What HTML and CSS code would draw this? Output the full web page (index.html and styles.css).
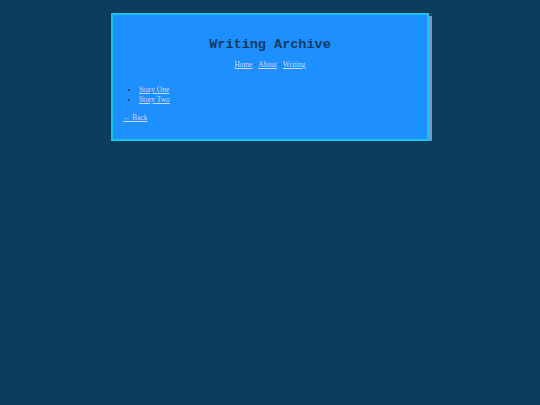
FILE: index.html
```html
<!DOCTYPE html>
<html>
<head>
<meta charset="utf-8">
<link rel="stylesheet" href="styles.css">
</head>
<body>
<div class="box">
  <h1 class="title">Writing Archive</h1>
  <nav class="nav"><a href="#">Home</a> · <a href="#">About</a> · <a href="#">Writing</a></nav>
  <ul class="list">
    <li><a href="#">Story One</a></li>
    <li><a href="#">Story Two</a></li>
  </ul>
  <p class="back"><a href="#">← Back</a></p>
</div>
</body>
</html>
```
FILE: styles.css
```css
html, body {
  margin: 0;
  padding: 0;
  background: #0b3d5e;
  font-family: "Liberation Serif", "Times New Roman", serif;
}
body {
  padding-top: 13px;
}
.box {
  width: 294px;
  margin: 0 auto;
  background: #1e8fff;
  border: 2px solid #19c4e4;
  box-shadow: 3px 3px 0 #8290c8;
  padding: 22px 10px 16px 10px;
  font-size: 7.4px;
  color: #103c5c;
}
.title {
  margin: 0;
  font-family: "Liberation Mono", "Courier New", monospace;
  font-weight: bold;
  font-size: 13.5px;
  line-height: 16px;
  text-align: center;
  color: #0f3a5e;
}
.nav {
  margin-top: 7px;
  line-height: 10px;
  text-align: center;
}
a {
  color: #cfd4ff;
}
.list {
  margin: 15px 0 0 0;
  padding-left: 16px;
  line-height: 10px;
}
.back {
  margin: 8px 0 0 0;
  line-height: 10px;
}
```
